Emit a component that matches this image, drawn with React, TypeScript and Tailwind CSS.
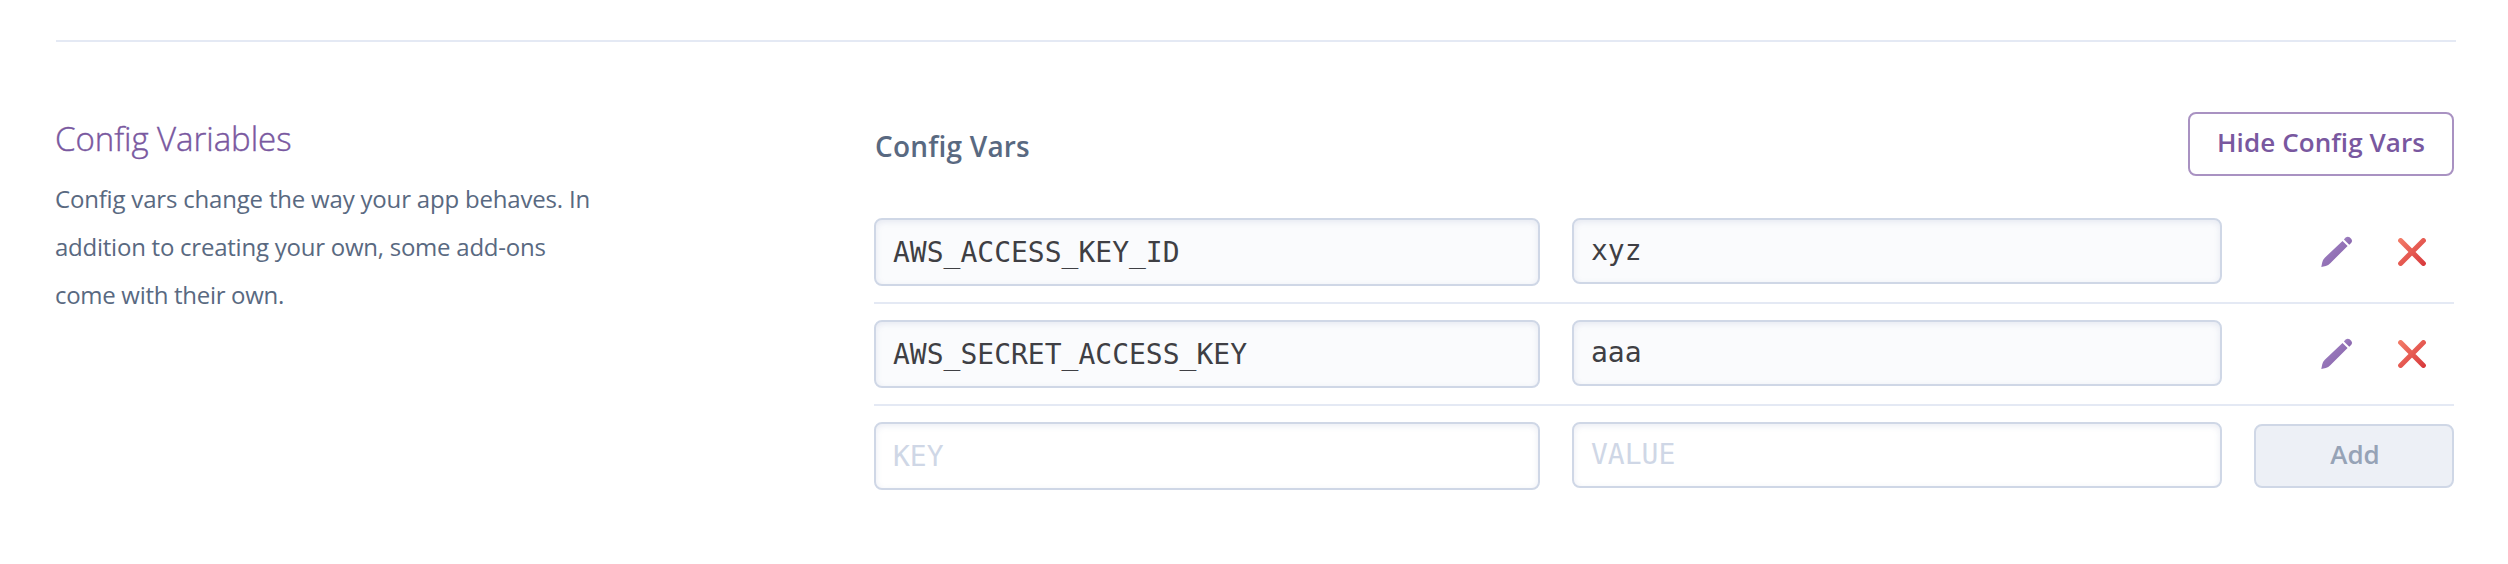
type ConfigVar = { name: string; value: string };

const configVars: ConfigVar[] = [
  { name: "AWS_ACCESS_KEY_ID", value: "xyz" },
  { name: "AWS_SECRET_ACCESS_KEY", value: "aaa" },
];

const fieldClass =
  "block rounded-[8px] border-2 border-[#cfd7e6] pl-[17px] pr-4 font-['DejaVu_Sans_Mono',monospace] text-[28px] text-[#3f3f44] shadow-[inset_0_2px_6px_rgba(90,105,160,0.13)] outline-none placeholder:text-[#cfd7e6] placeholder:opacity-100";

function PencilIcon() {
  return (
    <svg width="32" height="32" viewBox="0 0 32 32" aria-hidden="true">
      <defs>
        <linearGradient id="pencil-fill" x1="0" y1="0" x2="1" y2="1">
          <stop offset="0" stopColor="#a184c3" />
          <stop offset="1" stopColor="#8661aa" />
        </linearGradient>
      </defs>
      <g fill="url(#pencil-fill)">
        <path d="M0.3 31.1L1.2 26.4Q1.8 23.6 3.8 21.7L21.5 4.9L26.6 10L9.3 27.2Q7.4 29.2 4.8 30Z" />
        <path d="M22.9 3.5L24.6 1.6Q26.6 0 28.6 1.2L30.4 3Q31.9 4.9 30.3 6.8L28.3 8.7Z" />
      </g>
    </svg>
  );
}

function RemoveIcon() {
  return (
    <svg width="28" height="28" viewBox="0 0 28 28" aria-hidden="true">
      <defs>
        <linearGradient id="remove-stroke" gradientUnits="userSpaceOnUse" x1="0" y1="0" x2="28" y2="28">
          <stop offset="0" stopColor="#f47e69" />
          <stop offset="1" stopColor="#d7373b" />
        </linearGradient>
      </defs>
      <path d="M2.6 2.6L25.4 25.4M25.4 2.6L2.6 25.4" fill="none" stroke="url(#remove-stroke)" strokeWidth="5" strokeLinecap="round" />
    </svg>
  );
}

function ConfigRow({ name, value }: ConfigVar) {
  return (
    <div className="flex border-b-2 border-[#e4e9f4] py-4">
      <input readOnly defaultValue={name} className={`${fieldClass} h-[68px] w-[666px] bg-[#fafbfd]`} />
      <input readOnly defaultValue={value} className={`${fieldClass} ml-8 h-[66px] w-[650px] bg-[#fafbfd] pb-[2px]`} />
      <div className="flex h-[68px] flex-1 items-center justify-end gap-[45px] pr-7">
        <button type="button">
          <PencilIcon />
        </button>
        <button type="button">
          <RemoveIcon />
        </button>
      </div>
    </div>
  );
}

export default function App() {
  return (
    <div className="h-[564px] w-[2508px] bg-white pl-[55px] pt-10 font-['Open_Sans',sans-serif]">
      <div className="ml-px w-[2400px] border-t-2 border-[#e4e9f4]" />
      <div className="flex w-[2399px] pt-[70px]">
        <section className="w-[819px] shrink-0 pt-[3px]">
          <h2 className="text-[33px] font-light leading-[48px] tracking-[-0.05px] text-[#79589f] [-webkit-text-stroke:0.4px_#79589f]">Config Variables</h2>
          <p className="mt-[12px] text-2xl leading-[48px] tracking-[-0.19px] text-[#596981]">
            Config vars change the way your app behaves. In
            <br />
            <span className="tracking-[-0.24px]">addition to creating your own, some add-ons</span>
            <br />
            <span className="tracking-[-0.3px]">come with their own.</span>
          </p>
        </section>
        <section className="flex-1">
          <div className="mb-[26px] flex h-16 items-center justify-between">
            <h3 className="pl-px pt-[3px] text-[28px] font-semibold leading-[40px] tracking-[0.2px] text-[#596981]">Config Vars</h3>
            <button
              type="button"
              className="h-16 w-[266px] rounded-[8px] border-2 border-[#a992c2] pb-1 text-[26px] font-semibold leading-[40px] tracking-[0.1px] text-[#79589f]"
            >
              Hide Config Vars
            </button>
          </div>
          {configVars.map((item) => (
            <ConfigRow key={item.name} {...item} />
          ))}
          <div className="flex pt-4">
            <input placeholder="KEY" className={`${fieldClass} h-[68px] w-[666px] bg-white`} />
            <input placeholder="VALUE" className={`${fieldClass} ml-8 h-[66px] w-[650px] bg-white pb-[2px]`} />
            <button
              type="button"
              className="ml-8 mt-[2px] h-16 w-[200px] rounded-[8px] border-2 border-[#cfd7e6] bg-[#edf0f6] pb-1 pl-[2px] text-[26px] font-semibold leading-[40px] text-[#96a3b6]"
            >
              Add
            </button>
          </div>
        </section>
      </div>
    </div>
  );
}
